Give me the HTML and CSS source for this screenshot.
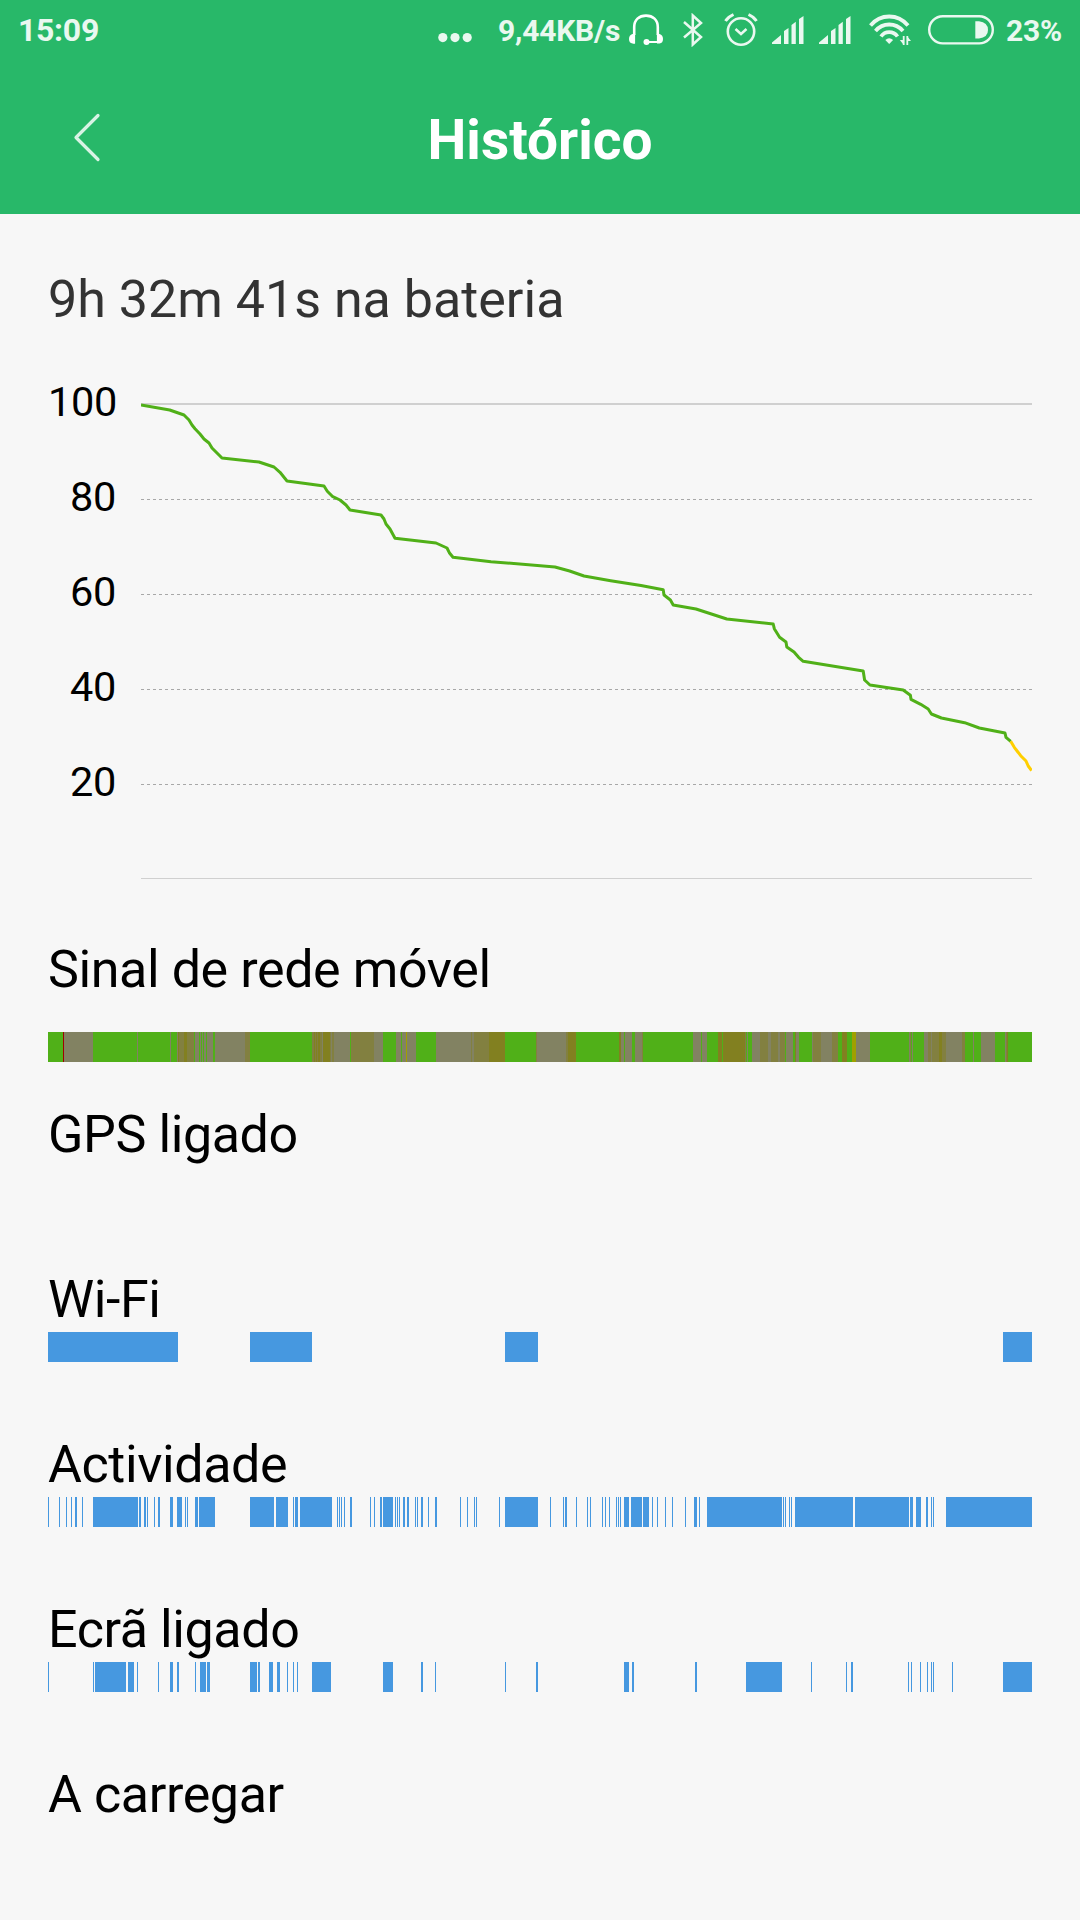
FILE: index.html
```html
<!DOCTYPE html>
<html lang="pt-PT">

<head>
  <meta charset="UTF-8" />
  <meta name="viewport" content="width=device-width, initial-scale=1" />
  <title>Histórico</title>
  <link rel="stylesheet" href="styles.css">
</head>

<body>
  <header class="header">
    <div class="status-bar">
      <span class="clock">15:09</span>
      <div class="status-icons">
        <svg class="icon-dots" width="34" height="32" viewBox="0 0 34 32" fill="currentColor">
          <circle cx="4.8" cy="23.6" r="4.6" /><circle cx="17" cy="23.6" r="4.6" /><circle cx="29.2" cy="23.6" r="4.6" />
        </svg>
        <span class="speed">9,44KB/s</span>
        <svg class="icon-headset" width="34" height="32" viewBox="0 0 34 32" fill="none" stroke="currentColor">
          <path d="M5.2 21V13C5.2 6 10 1.6 17 1.6S28.800 6 28.800 13V21" stroke-width="2.600" />
          <path d="M5 20v9.500M29 20v8h-11" stroke-width="2.200" />
          <path d="M6 20v9.500H3.500Q0 29 0 25t3.500-5zM28 20v9.500h2.500Q34 29 34 25t-3.500-5z" fill="currentColor" stroke="none" />
          <circle cx="17.500" cy="28" r="3" fill="currentColor" stroke="none" />
        </svg>
        <svg class="icon-bluetooth" width="20" height="34" viewBox="0 0 20 34" fill="none" stroke="currentColor" stroke-width="2.500">
          <path d="M1 9L18 24L9.800 31.500V2.500L18 10L1 24.500" />
        </svg>
        <svg class="icon-alarm" width="34" height="34" viewBox="0 0 34 34" fill="none" stroke="currentColor">
          <circle cx="17" cy="18.500" r="13.200" stroke-width="2.600" />
          <path d="M11.500 16l5.500 5 5.500-5" stroke-width="2.500" />
          <path d="M1.500 8Q4 4 9.500 1.500M32.500 8Q30 4 24.500 1.500" stroke-width="3" />
        </svg>
        <svg class="icon-signal" width="32" height="28" viewBox="0 0 32 28" fill="currentColor">
          <path d="M0 28V26.500L9 19V28zM12 28V15l4.500-3V28zM19.500 28V9l4.300-3.300V28zM27 28V3l4.500-3V28z" />
        </svg>
        <svg class="icon-signal" width="32" height="28" viewBox="0 0 32 28" fill="currentColor">
          <path d="M0 28V26.500L9 19V28zM12 28V15l4.500-3V28zM19.500 28V9l4.300-3.300V28zM27 28V3l4.500-3V28z" />
        </svg>
        <svg class="icon-wifi" width="43" height="32" viewBox="0 0 43 32" fill="none" stroke="currentColor" stroke-width="3.800">
          <path d="M1.500 11.500Q9 2.500 20.200 2.500T39 11.500M6.500 17Q12 10.500 20.200 10.500T34 17M12 22.500Q15 18.200 20.200 18.200T28.500 22.500" />
          <path d="M16.300 26Q20.200 22.500 24.100 26L20.200 30z" fill="currentColor" stroke="none" />
          <path d="M34.700 22v9M38.300 31v-9" stroke-width="1.800" />
          <path d="M30.800 26h4v5zM42 27h-4v-5z" fill="currentColor" stroke="none" />
        </svg>
        <svg class="icon-battery" width="66" height="30" viewBox="0 0 66 30" fill="none" stroke="currentColor">
          <rect x="1.200" y="1.200" width="63.600" height="27.200" rx="13.600" stroke-width="2.400" />
          <path d="M47.300 6.300H51Q60 7.500 60 15T51 23.500H47.300z" fill="currentColor" stroke="none" />
        </svg>
        <span class="percent">23%</span>
      </div>
    </div>
    <div class="title-bar">
      <svg class="back" width="28" height="50" viewBox="0 0 28 50" fill="none" stroke="currentColor" stroke-width="3.200" stroke-linecap="round" stroke-linejoin="round">
        <path d="M25 2.500L3 24.500L25 46.500" />
      </svg>
      <h1>Histórico</h1>
    </div>
  </header>

  <main>
    <h2>9h 32m 41s na bateria</h2>

    <div class="chart">
      <div class="scale">
        <span>100</span>
        <span>80</span>
        <span>60</span>
        <span>40</span>
        <span>20</span>
      </div>
      <svg class="plot" width="891" height="480" viewBox="0 0 891 480" fill="none">
        <path d="M0 1h891" stroke="#d0d0d0" stroke-width="2" />
        <path d="M0 96.500h891M0 191.500h891M0 286.500h891M0 381.500h891" stroke="#a8a8a8" stroke-dasharray="3 3" />
        <path d="M0 475.500h891" stroke="#d0d0d0" />
        <polyline class="level" points="0,2 28.700,7 43,12 48,17 51,22 54,25.700 59,31 63,36 68,40 71,45 81,55 118,59 133,64 139,69.300 146,78 183,83 186.300,88.300 191.300,93.300 199,97 205,102 209,107 240,112 243,116 245,121 249,126 254,135.300 295,140 306,145 308.300,149.700 312,154.300 350,158.700 414,164 428.600,168 443,173 469.700,177.700 500,182.500 522.200,186.700 523,192 529.400,197 532.200,202 555,206 585.800,216 632.200,221 633.300,225.700 638.600,234.300 645,239 645.800,244 653,249 657.600,254.300 662.200,258.300 722.200,268 723.600,277 729,282 762.200,287 769.400,292.300 770,296.300 779.700,301.300 787.200,306 790.400,311 800.400,315 823.600,319.700 838.300,325 864,330 865,334.300 869.700,338.300" />
        <polyline class="level low" points="869.700,338.300 873.300,344.300 879.700,352.700 885,358 887.200,363 890.600,367.500" />
      </svg>
    </div>

    <section class="row signal">
      <h3>Sinal de rede móvel</h3>
      <svg id="signal" class="bar" width="984" height="30"></svg>
    </section>
    <section class="row">
      <h3>GPS ligado</h3>
    </section>
    <section class="row">
      <h3>Wi-Fi</h3>
      <svg id="wifi" class="bar" width="984" height="30"></svg>
    </section>
    <section class="row">
      <h3>Actividade</h3>
      <svg id="activity" class="bar" width="984" height="30"></svg>
    </section>
    <section class="row">
      <h3>Ecrã ligado</h3>
      <svg id="screen" class="bar" width="984" height="30"></svg>
    </section>
    <section class="row">
      <h3>A carregar</h3>
    </section>
  </main>

  <script src="script.js"></script>
</body>

</html>
```

FILE: styles.css
```css
body {
  margin: 0;
  height: 1920px;
  overflow: hidden;
  background-color: #f7f7f7;
  font-family: Roboto, sans-serif;
  color: #000;
}

h1,
h2,
h3 {
  margin: 0;
}

svg {
  display: block;
  flex-shrink: 0;
}

.header {
  height: 214px;
  background-color: #28b869;
}

.status-bar {
  display: flex;
  justify-content: space-between;
  height: 60px;
  padding: 0 18px;
  color: #eaf8f0;
  font-weight: 700;
  line-height: 61px;
}

.clock {
  font-size: 32px;
  letter-spacing: -0.3px;
}

.status-icons {
  display: flex;
  align-items: flex-start;
  font-size: 30px;
  letter-spacing: -0.2px;
}

.icon-dots {
  margin: 14px 26px 0 0;
}

.speed {
  width: 131px;
}

.icon-headset {
  margin: 14px 20px 0 0;
  color: #fff;
}

.icon-bluetooth {
  margin: 13px 21px 0 0;
}

.icon-alarm {
  margin: 13px 14px 0 0;
}

.icon-signal {
  margin: 16px 15px 0 0;
}

.icon-wifi {
  margin: 14px 16px 0 3px;
}

.icon-battery {
  margin: 15px 12px 0 0;
}

.percent {
  width: 56px;
}

.title-bar {
  display: grid;
  grid-template-columns: 73px 1fr 73px;
  height: 154px;
}

.back {
  margin: 53px 0 0 73px;
  color: #d9f3e5;
}

h1 {
  color: #fff;
  font-size: 55px;
  font-weight: 700;
  line-height: 160px;
  text-align: center;
}

main {
  padding: 0 48px;
}

h2 {
  padding-top: 55px;
  color: #333;
  font-size: 52px;
  font-weight: 400;
  line-height: 62px;
}

.chart {
  display: flex;
  justify-content: space-between;
  height: 523px;
  padding-top: 72px;
}

.scale {
  width: 68px;
  margin-top: -49px;
  font-size: 41.5px;
  letter-spacing: -0.3px;
  line-height: 95px;
  text-align: right;
}

.scale span {
  display: block;
}

.level {
  stroke: #50b018;
  stroke-width: 3;
  stroke-linejoin: round;
}

.low {
  stroke: #ffcf00;
}

.row {
  height: 165px;
}

h3 {
  height: 76px;
  font-size: 52px;
  font-weight: 400;
  letter-spacing: -0.4px;
  line-height: 87px;
}

.signal .bar {
  margin-top: 30px;
}

.bar {
  shape-rendering: crispEdges;
}
```

FILE: script.js
```js
const BLUE = '#4698e0';
const WIDTH = 984;

// start of each stretch and its signal level
const levels = { g: '#50b018', n: '#828262', m: '#828040', o: '#828020', y: '#a0a000', r: '#a00000' };
const signal = '0g 15r 16n 45g 89n 90g 122n 123g 129n 130o 131m 136o 139m 146g 147n 151g 152n 153g 154n 155g 156n 158g 159n 165g 167n 197m 202g 264m 266o 267m 268o 269m 270o 272m 274n 275o 282m 283n 284m 286n 302g 303m 326n 335g 348n 353g 354n 358y 359n 368g 388n 423m 424n 426m 441o 457g 488m 489n 518m 520o 528g 571o 573n 576g 577n 584g 587n 594m 595g 645n 653g 654n 659g 670o 674g 675o 697m 698g 699n 700g 704n 712m 720n 723m 730n 732m 737g 738n 745g 747o 748n 751g 764n 765m 773n 784m 790g 794o 799g 804y 808n 822g 861n 862m 863g 864n 865g 876n 880m 883n 884m 891o 894m 898n 914m 917g 925n 926g 933n 947g 957n 958m 959o 960g';

// [start, width]
const wifi = [[0, 130], [202, 62], [457, 33], [955, 29]];

const activity = [
  [0, 1], [11, 1], [18, 1], [23, 1], [27, 2], [34, 1], [45, 45], [91, 2], [96, 2], [99, 1], [106, 1], [110, 2],
  [122, 3], [129, 5], [137, 1], [139, 1], [147, 3], [151, 16], [202, 24], [228, 12], [245, 1], [247, 3], [252, 32],
  [289, 1], [291, 1], [293, 1], [296, 1], [302, 2], [322, 1], [326, 1], [332, 2], [335, 10], [347, 1], [349, 1],
  [351, 1], [355, 2], [359, 2], [367, 1], [369, 1], [373, 2], [380, 1], [387, 2], [412, 1], [419, 1], [426, 1],
  [428, 1], [451, 1], [457, 33], [502, 1], [515, 1], [517, 2], [528, 1], [539, 1], [542, 1], [554, 1], [557, 1],
  [561, 1], [568, 1], [570, 1], [572, 1], [576, 5], [583, 11], [595, 6], [604, 1], [609, 1], [617, 1], [624, 1],
  [637, 1], [646, 3], [651, 1], [659, 75], [735, 1], [737, 1], [741, 1], [743, 1], [747, 58], [807, 54], [862, 3],
  [868, 5], [878, 2], [883, 1], [885, 1], [898, 86]
];

const screenOn = [
  [0, 1], [45, 1], [47, 31], [80, 6], [89, 1], [110, 1], [122, 3], [129, 2], [147, 1], [152, 6], [159, 3], [202, 7],
  [210, 2], [221, 4], [229, 3], [239, 1], [245, 1], [249, 1], [264, 19], [335, 10], [373, 2], [387, 1], [457, 1],
  [488, 2], [576, 5], [584, 2], [647, 2], [698, 36], [763, 1], [798, 1], [803, 2], [860, 1], [863, 1], [872, 1],
  [879, 1], [883, 1], [885, 1], [904, 1], [955, 29]
];

function addRect(svg, x, width, color) {
  const rect = document.createElementNS('http://www.w3.org/2000/svg', 'rect');
  rect.setAttribute('x', x);
  rect.setAttribute('width', width);
  rect.setAttribute('height', 30);
  rect.setAttribute('fill', color);
  svg.appendChild(rect);
}

function drawBar(id, ranges) {
  const svg = document.getElementById(id);
  ranges.forEach(([x, width]) => addRect(svg, x, width, BLUE));
}

const parts = signal.split(' ');
parts.forEach((part, i) => {
  const start = parseInt(part);
  const end = i + 1 < parts.length ? parseInt(parts[i + 1]) : WIDTH;
  addRect(document.getElementById('signal'), start, end - start, levels[part.slice(-1)]);
});

drawBar('wifi', wifi);
drawBar('activity', activity);
drawBar('screen', screenOn);
```
